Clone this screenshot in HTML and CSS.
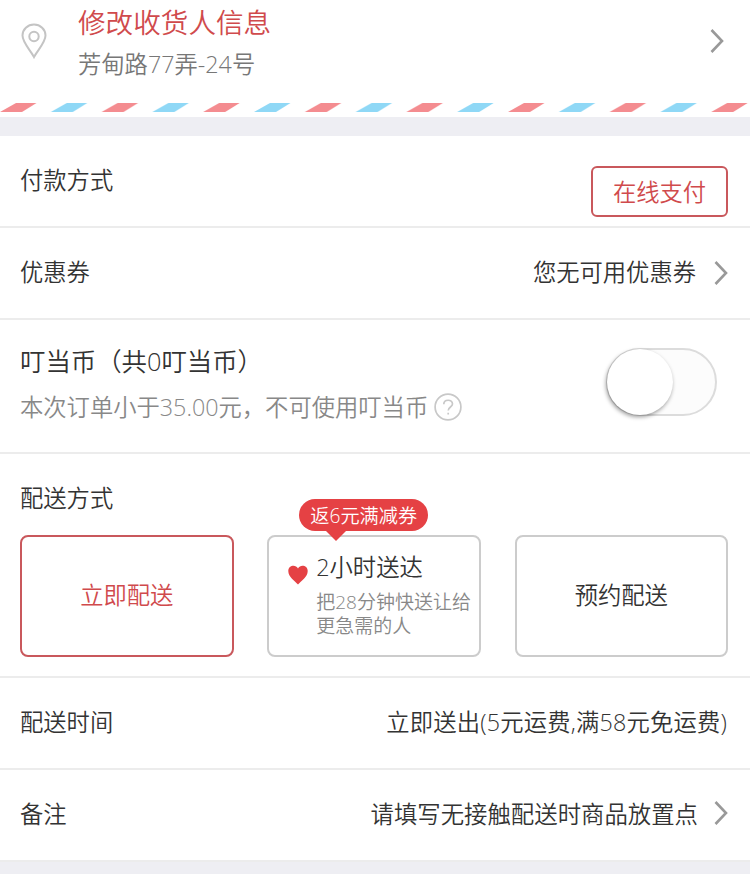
FILE: index.html
```html
<!DOCTYPE html>
<html lang="zh-CN">
<head>
<meta charset="UTF-8" />
<meta name="viewport" content="width=device-width, initial-scale=1.0"/>
<title>确认订单</title>
<link rel="stylesheet" href="styles.css">
</head>
<body>
<main>
  <section class="address">
    <svg class="pin" width="26" height="36" viewBox="0 0 26 36">
      <path d="M13 34 C10 28 1.5 19.500 1.500 12.500 A11.500 11 0 0 1 24.500 12.500 C24.500 19.500 16 28 13 34 Z"/>
      <circle cx="13" cy="13.500" r="4.700"/>
    </svg>
    <div class="address-info">
      <h1>修改收货人信息</h1>
      <p>芳甸路77弄-24号</p>
    </div>
    <svg class="arrow" width="14" height="26" viewBox="0 0 14 26"><path d="M1.500 2 L12 13 L1.500 24"/></svg>
  </section>
  <!-- airmail stripe -->
  <svg class="stripe" width="750" height="9" viewBox="0 0 750 9">
    <defs>
      <pattern id="mail" width="101.600" height="9" patternUnits="userSpaceOnUse">
        <path class="red" d="M0 9 L16 0 H36.500 L22 9 Z"/>
        <path class="blue" d="M50.800 9 L66.800 0 H87.300 L72.800 9 Z"/>
      </pattern>
    </defs>
    <rect width="750" height="9" fill="url(#mail)"/>
  </svg>
  <div class="gap"></div>

  <section class="row payment">
    <span class="label">付款方式</span>
    <button class="pay-btn">在线支付</button>
  </section>

  <section class="row">
    <span class="label">优惠券</span>
    <span class="value">您无可用优惠券</span>
    <svg class="arrow" width="14" height="26" viewBox="0 0 14 26"><path d="M1.500 2 L12 13 L1.500 24"/></svg>
  </section>

  <section class="row coins">
    <div class="coins-info">
      <h2>叮当币（共0叮当币）</h2>
      <p>本次订单小于35.00元，不可使用叮当币<svg class="help" width="28" height="28" viewBox="0 0 28 28"><circle cx="14" cy="14" r="12.900"/><path d="M9.800 11.200 C9.800 6 18.500 6 18.500 11 C18.500 14 14.200 14 14.200 17.500 M14.200 19.800 V21.600"/></svg></p>
    </div>
    <div class="switch"><div class="knob"></div></div>
  </section>

  <section class="delivery">
    <h3>配送方式</h3>
    <div class="options">
      <div class="option active">立即配送</div>
      <div class="option slow">
        <div class="badge">返6元满减券</div>
        <svg class="heart" width="20" height="20" viewBox="0 0 20 20"><path d="M10 19.500 C7 16 0.300 12 0.300 6 C0.300 0.500 7.500 -1 10 3.500 C12.500 -1 19.700 0.500 19.700 6 C19.700 12 13 16 10 19.500 Z"/></svg>
        <div>
          <div class="option-title">2小时送达</div>
          <div class="option-desc">把28分钟快送让给<br>更急需的人</div>
        </div>
      </div>
      <div class="option">预约配送</div>
    </div>
  </section>

  <section class="row time">
    <span class="label">配送时间</span>
    <span class="value">立即送出(5元运费,满58元免运费)</span>
  </section>

  <section class="row note">
    <span class="label">备注</span>
    <span class="value">请填写无接触配送时商品放置点</span>
    <svg class="arrow" width="14" height="26" viewBox="0 0 14 26"><path d="M1.500 2 L12 13 L1.500 24"/></svg>
  </section>
</main>
</body>
</html>
```
FILE: styles.css
```css
* {
  box-sizing: border-box;
}

body {
  font-family: "Open Sans", "Noto Sans CJK SC", sans-serif;
  font-size: 23.3px;
  font-weight: 350;
  line-height: 34px;
  background: #eeeef3;
  margin: 0;
  color: #333;
  overflow: hidden;
}

main {
  width: 750px;
  background: #fff;
}

h1, h2, h3, p {
  margin: 0;
  font-weight: 350;
}

.address {
  display: flex;
  height: 103px;
  padding: 0 26px 0 21px;
}

.pin {
  margin-top: 23px;
  fill: none;
  stroke: #c4c4c4;
  stroke-width: 2;
}

.address-info {
  flex: 1;
  margin-left: 31px;
}

.address-info h1 {
  font-size: 27.6px;
  line-height: 40px;
  padding-top: 2px;
  color: #d04a4c;
}

.address-info p {
  margin-top: 5px;
  color: #777;
}

.arrow {
  fill: none;
  stroke: #999;
  stroke-width: 2.6;
}

.address .arrow {
  margin-top: 28px;
}

.stripe {
  display: block;
}

.red {
  fill: #f48c90;
}

.blue {
  fill: #8fd8f6;
}

.gap {
  height: 24px;
  border-top: 5px solid #fff;
  background: #eeeef3;
}

.row {
  display: flex;
  align-items: center;
  height: 92px;
  padding: 0 22px 0 20px;
  border-bottom: 2px solid #ececec;
}

.label {
  flex: 1;
}

.label,
.value {
  padding-bottom: 2px;
}

.row .arrow {
  margin-left: 18px;
}

.payment {
  align-items: flex-start;
}

.payment .label {
  margin-top: 27px;
}

.pay-btn {
  width: 137px;
  height: 51px;
  margin-top: 30px;
  padding: 0;
  border: 2px solid #c9585c;
  border-radius: 6px;
  background: #fff;
  color: #d04a4c;
  font: inherit;
}

.coins {
  height: 134px;
  align-items: flex-start;
}

.coins-info {
  flex: 1;
  padding-top: 23px;
}

.coins h2 {
  font-size: 25.4px;
  line-height: 36px;
}

.coins p {
  display: flex;
  align-items: center;
  margin-top: 11px;
  color: #888;
}

.help {
  margin-left: 6px;
  fill: none;
  stroke: #c8c8c8;
  stroke-width: 1.7;
}

.switch {
  width: 111px;
  height: 68px;
  margin: 28px 11px 0 0;
  border: 2px solid #dcdcdc;
  border-radius: 34px;
  background: #fcfcfc;
}

.knob {
  width: 66px;
  height: 66px;
  margin: -1px 0 0 -1px;
  border-radius: 50%;
  background: #fff;
  box-shadow: -1px 2px 4px rgba(0, 0, 0, 0.4);
}

.delivery {
  height: 224px;
  padding: 27px 22px 0 20px;
  border-bottom: 2px solid #ececec;
}

.delivery h3 {
  font-size: 23.3px;
}

.options {
  display: flex;
  justify-content: space-between;
  margin-top: 20px;
}

.option {
  position: relative;
  display: flex;
  align-items: center;
  justify-content: center;
  width: 213.5px;
  height: 122px;
  padding-bottom: 2px;
  border: 2px solid #ccc;
  border-radius: 8px;
}

.option.active {
  border-color: #c9585c;
  color: #d04a4c;
}

.option.slow {
  align-items: flex-start;
  justify-content: flex-start;
  padding: 13px 0 0 19px;
  white-space: nowrap;
}

.heart {
  margin: 15px 8px 0 0;
  fill: #e54144;
}

.option-desc {
  margin-top: 6px;
  font-size: 19px;
  line-height: 24px;
  color: #888;
}

.badge {
  position: absolute;
  top: -38px;
  left: 30px;
  width: 129px;
  height: 32px;
  border-radius: 16px;
  background: #e54144;
  color: #fff;
  font-size: 19.2px;
  line-height: 33px;
  text-align: center;
}

/* little pointer under the badge */
.badge::after {
  content: "";
  position: absolute;
  top: 31px;
  left: 26px;
  border: 11px solid transparent;
  border-top-color: #e54144;
  border-bottom: 0;
}

.time .value {
  margin-right: 1px;
  letter-spacing: 0.2px;
}

.note .value {
  font-size: 23.4px;
}

.note .arrow {
  margin: 0 0 5px 16px;
}
```
